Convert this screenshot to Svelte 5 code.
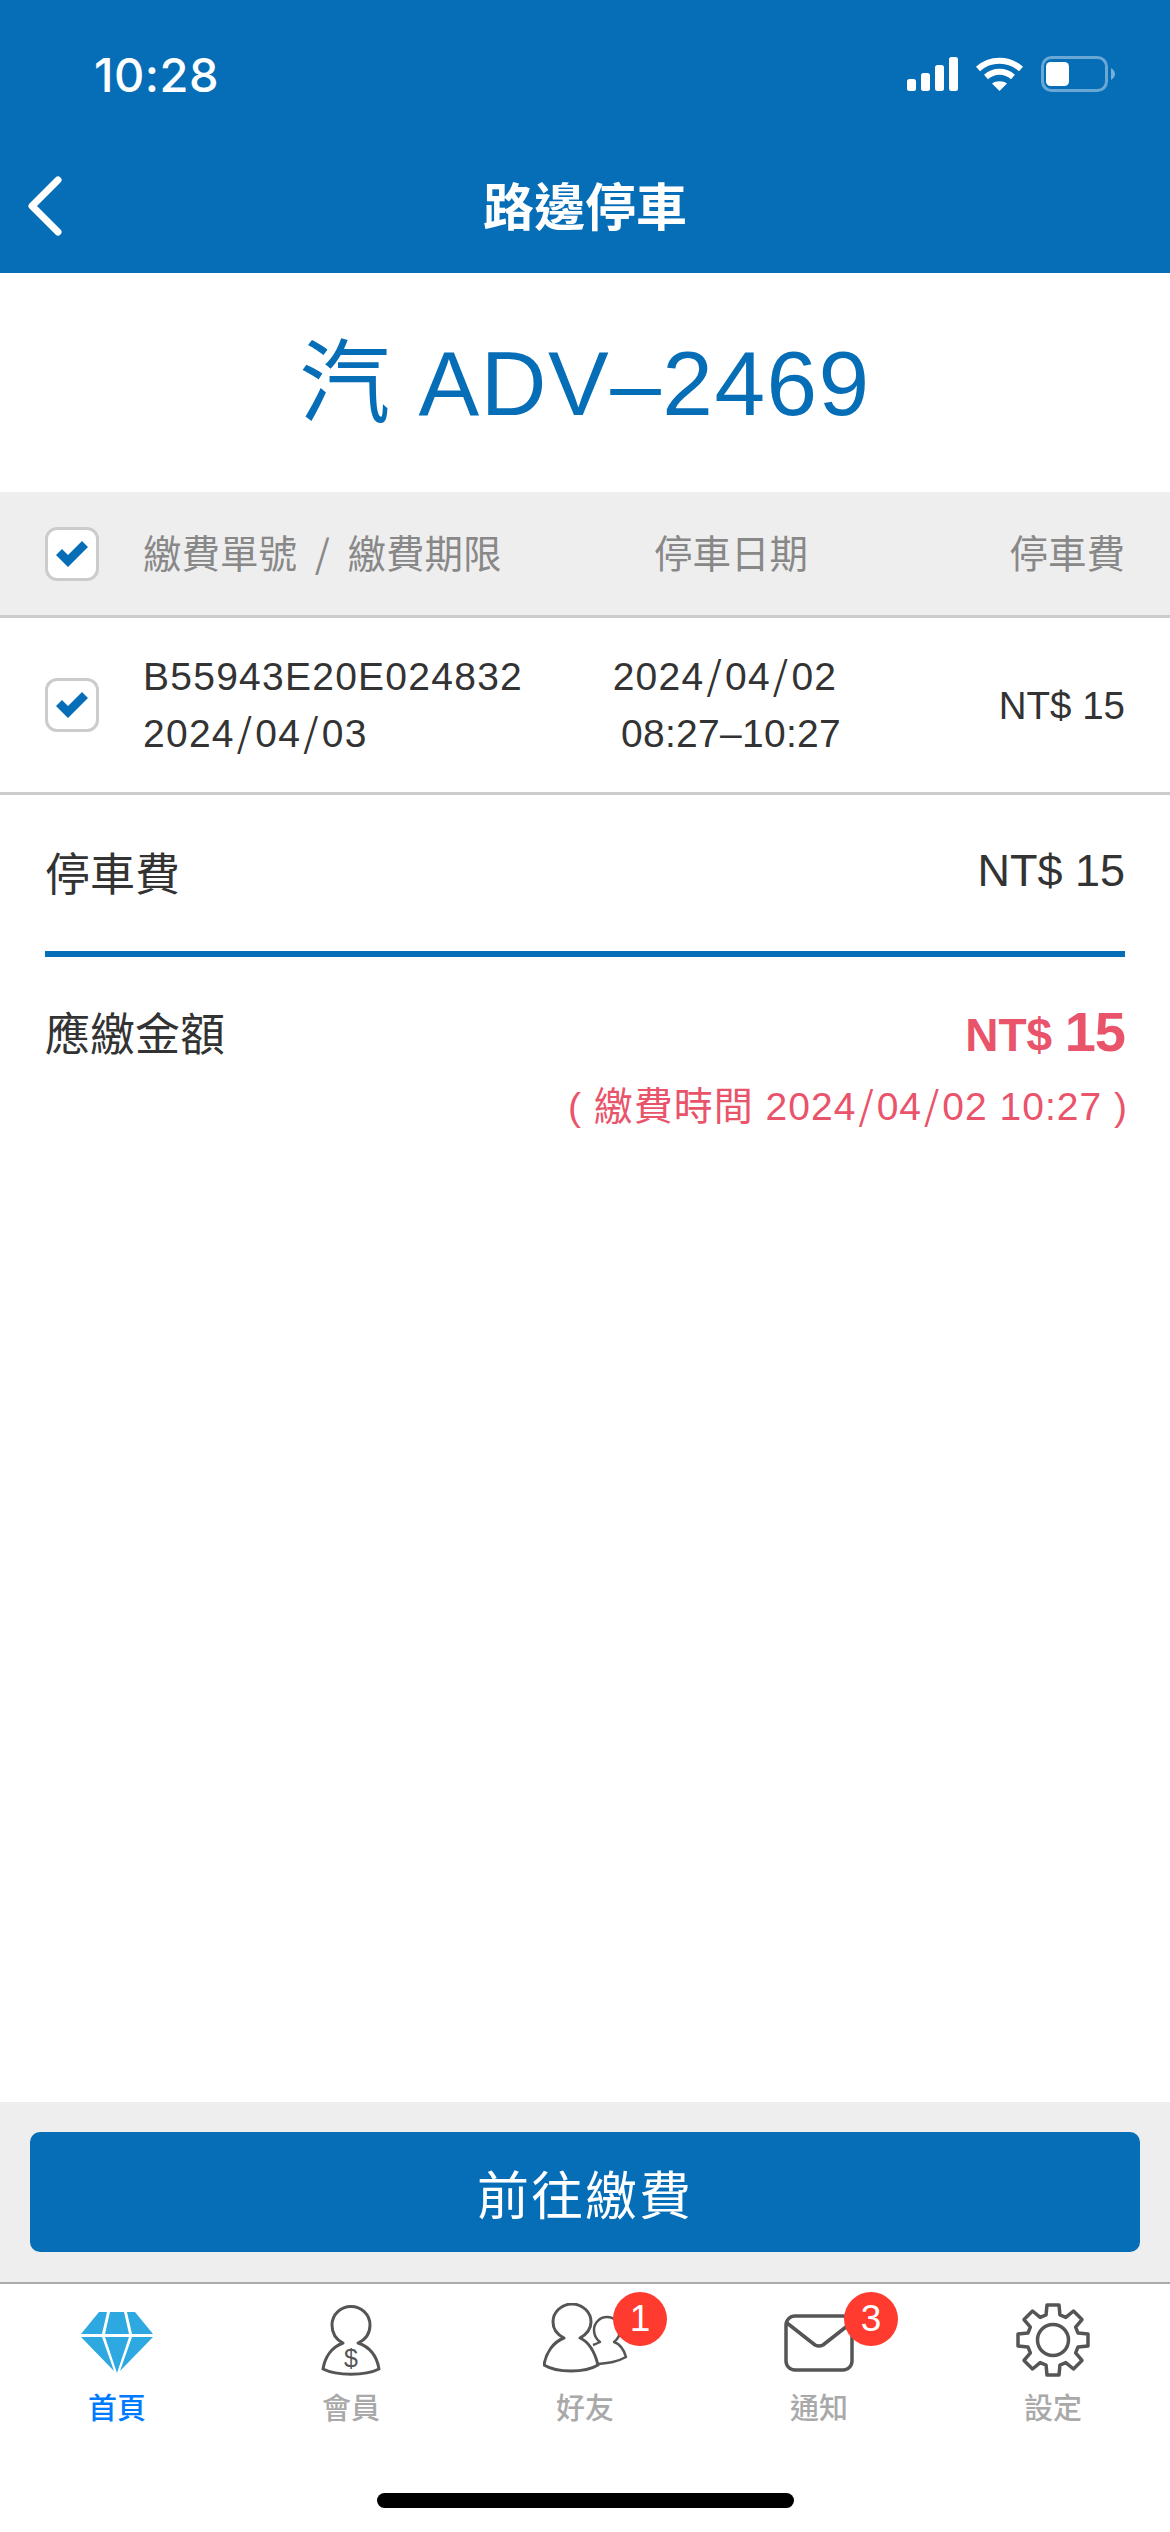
<script>
  function gearPath() {
    const cx = 37, cy = 37, outer = 35.5, inner = 26, n = 8;
    let d = '';
    const pt = (r, a) => `${(cx + r * Math.sin(a)).toFixed(2)} ${(cy - r * Math.cos(a)).toFixed(2)}`;
    for (let i = 0; i < n; i++) {
      const a = (i * 2 * Math.PI) / n;
      const w1 = 0.27, w2 = 0.17;
      d += `${i === 0 ? 'M' : 'L'}${pt(inner, a - w1)} L${pt(outer, a - w2)} L${pt(outer, a + w2)} L${pt(inner, a + w1)} `;
    }
    return d + 'Z';
  }
  const gear = gearPath();
</script>

<div class="page">
  <header class="head">
    <div class="status">
      <span class="time">10:28</span>
      <div class="status-icons">
        <svg width="51" height="34" viewBox="0 0 51 34" fill="#fff">
          <rect x="0" y="22" width="9" height="12" rx="2.500"/>
          <rect x="14" y="16" width="9" height="18" rx="2.500"/>
          <rect x="28" y="8" width="9" height="26" rx="2.500"/>
          <rect x="42" y="0" width="9" height="34" rx="2.500"/>
        </svg>
        <svg width="49" height="36" viewBox="0 0 49 36" fill="none" stroke="#fff" stroke-width="6">
          <path d="M3 13 C15 2 34 2 46 13"/>
          <path d="M11 21 C19 14 30 14 38 21"/>
          <path d="M17 27.500 C21 24.500 28 24.500 32 27.500 L24.500 35 Z" fill="#fff" stroke="none"/>
        </svg>
        <svg width="74" height="36" viewBox="0 0 74 36" fill="none">
          <rect x="1.500" y="1.500" width="64" height="33" rx="9" stroke="#fff" stroke-opacity=".4" stroke-width="3"/>
          <rect x="5" y="6" width="23" height="24" rx="4.500" fill="#fff"/>
          <path d="M70 12 C73 14 74 16 74 18 C74 20 73 22 70 24 Z" fill="#fff" fill-opacity=".45"/>
        </svg>
      </div>
    </div>
    <div class="nav">
      <svg class="back" width="38" height="60" viewBox="0 0 38 60" fill="none" stroke="#fff" stroke-width="7" stroke-linecap="round" stroke-linejoin="round">
        <path d="M33 4 L7 30 L33 56"/>
      </svg>
      <h1>路邊停車</h1>
    </div>
  </header>

  <div class="plate">汽 ADV–2469</div>

  <div class="row thead">
    <span class="check"><svg width="34" height="28" viewBox="0 0 34 28"><path d="M1 15 L7 9 L13 15 L27 1 L33 7 L13 27 Z" fill="#066db7"/></svg></span>
    <span class="c-no">繳費單號 <i class="sl">/</i> 繳費期限</span>
    <span class="c-date">停車日期</span>
    <span class="c-fee">停車費</span>
  </div>

  <div class="row tbody">
    <span class="check"><svg width="34" height="28" viewBox="0 0 34 28"><path d="M1 15 L7 9 L13 15 L27 1 L33 7 L13 27 Z" fill="#066db7"/></svg></span>
    <span class="c-no"><span>B55943E20E024832</span><span>2024<i class="sl">/</i>04<i class="sl">/</i>03</span></span>
    <span class="c-date"><span>2024<i class="sl">/</i>04<i class="sl">/</i>02&nbsp;</span><span class="span-time">08:27–10:27</span></span>
    <span class="c-fee">NT$ 15</span>
  </div>

  <div class="sum">
    <span>停車費</span>
    <span>NT$ 15</span>
  </div>

  <div class="total">
    <div class="total-line">
      <span>應繳金額</span>
      <span class="amount"><b class="cur">NT$</b> <b class="num">15</b></span>
    </div>
    <div class="deadline">( 繳費時間 2024<i class="sl">/</i>04<i class="sl">/</i>02 10:27 )</div>
  </div>

  <div class="spacer"></div>

  <div class="action">
    <button type="button">前往繳費</button>
  </div>

  <nav class="tabs">
    <div class="tab active">
      <svg class="icon diamond" width="74" height="62" viewBox="0 0 74 62" fill="#2da8e0">
        <path d="M19 1 L27 1 L22 23 L1 23 Z"/>
        <path d="M30 1 L44 1 L49 23 L25 23 Z"/>
        <path d="M47 1 L55 1 L73 23 L52 23 Z"/>
        <path d="M1 26 L22 26 L34 60 Z"/>
        <path d="M25 26 L49 26 L37 62 Z"/>
        <path d="M52 26 L73 26 L40 60 Z"/>
      </svg>
      <span>首頁</span>
    </div>
    <div class="tab">
      <svg class="icon member" width="60" height="72" viewBox="0 0 60 72" fill="none" stroke="#555" stroke-width="3">
        <path d="M22 38 C14 34 11 27 11 20 A19 18.500 0 0 1 49 20 C49 27 46 34 37 38 C49 42 56 52 58 64 C44 71 16 71 2 64 C4 52 11 42 22 38 Z" stroke-linejoin="round"/>
        <text x="30" y="62" text-anchor="middle" class="dollar">$</text>
      </svg>
      <span>會員</span>
    </div>
    <div class="tab">
      <svg class="icon friends" width="86" height="72" viewBox="0 0 86 72" fill="none" stroke="#555" stroke-width="3" stroke-linejoin="round">
        <path d="M50 42 C53 41 55 40 57 39 C53 36 51 32 51 27 A13 13 0 0 1 77 27 C77 32 75 36 71 39 C77 41 81 47 83 54 C74 59 66 60 55 61" stroke-width="2.500"/>
        <path d="M21 35 C13 31 10 26 10 19 A19 18 0 0 1 48 19 C48 26 44 31 37 35 C46 39 52 50 55 62 C42 70 14 70 1 62 C3 50 10 39 21 35 Z" fill="#fff"/>
      </svg>
      <span>好友</span>
      <b class="badge">1</b>
    </div>
    <div class="tab">
      <svg class="icon mail" width="70" height="58" viewBox="0 0 70 58" fill="none" stroke="#555" stroke-width="3.500">
        <rect x="2" y="2" width="66" height="54" rx="9"/>
        <path d="M3 9 L31 31 Q35 33 39 31 L67 9" stroke-linejoin="round"/>
      </svg>
      <span>通知</span>
      <b class="badge">3</b>
    </div>
    <div class="tab">
      <svg class="icon settings" width="74" height="74" viewBox="0 0 74 74" fill="none" stroke="#555" stroke-width="3.500" stroke-linejoin="round">
        <path d={gear}/>
        <circle cx="37" cy="37" r="15.500"/>
      </svg>
      <span>設定</span>
    </div>
    <div class="home-bar"></div>
  </nav>
</div>

<style>
  :global(body) {
    margin: 0;
    background: #fff;
  }
  .page {
    width: 1170px;
    height: 2532px;
    display: flex;
    flex-direction: column;
    font-family: "Liberation Sans", "Noto Sans CJK TC", sans-serif;
    color: #333;
    overflow: hidden;
  }
  .sl {
    font-family: "Noto Sans CJK TC", sans-serif;
    font-style: normal;
    padding: 0 2px;
    line-height: 1;
  }
  .head {
    height: 273px;
    background: #066db7;
    color: #fff;
    flex: none;
  }
  .status {
    height: 132px;
    box-sizing: border-box;
    padding: 53px 55px 0 94px;
    display: flex;
    justify-content: space-between;
    align-items: flex-start;
  }
  .time {
    font-family: Inter, "Liberation Sans", sans-serif;
    font-weight: 500;
    font-size: 47px;
    line-height: 44px;
    letter-spacing: 0.5px;
  }
  .status-icons {
    display: flex;
    align-items: center;
    gap: 17px;
    padding-top: 3px;
  }
  .nav {
    height: 141px;
    box-sizing: border-box;
    padding-top: 12px;
    position: relative;
    display: flex;
    align-items: center;
    justify-content: center;
  }
  .nav h1 {
    margin: 0;
    font-size: 51px;
    line-height: 60px;
    font-weight: 700;
  }
  .back {
    position: absolute;
    left: 25px;
    top: 44px;
  }
  .plate {
    height: 219px;
    flex: none;
    display: flex;
    align-items: center;
    justify-content: center;
    color: #066db7;
    font-size: 91px;
    letter-spacing: 1.5px;
    padding-bottom: 16px;
    box-sizing: border-box;
  }
  .row {
    display: grid;
    grid-template-columns: 54px 432px 400px 1fr;
    align-items: center;
    padding: 0 45px;
    border-bottom: 3px solid #ccc;
    box-sizing: border-box;
    flex: none;
  }
  .row .check {
    width: 54px;
    height: 54px;
    box-sizing: border-box;
    border: 3px solid #ccc;
    border-radius: 12px;
    background: #fff;
    display: flex;
    align-items: center;
    justify-content: center;
  }
  .c-no {
    display: flex;
    flex-direction: column;
    margin-left: 44px;
    white-space: nowrap;
  }
  .c-date {
    display: flex;
    flex-direction: column;
    align-items: center;
    text-align: center;
    white-space: nowrap;
  }
  .c-fee {
    text-align: right;
    white-space: nowrap;
  }
  .thead {
    height: 126px;
    background: #eee;
    color: #888;
    font-size: 38.500px;
  }
  .thead > span:not(.check) {
    margin-bottom: 6px;
    display: block;
  }
  .thead .c-no { word-spacing: 5px; }
  .tbody {
    height: 177px;
    font-size: 39px;
    letter-spacing: 1.25px;
    line-height: 57px;
  }
  .span-time { letter-spacing: 0.3px; }
  .tbody .c-fee {
    font-size: 38.500px;
    letter-spacing: 0;
  }
  .sum {
    flex: none;
    height: 162px;
    margin: 0 45px;
    box-sizing: border-box;
    border-bottom: 6px solid #066db7;
    padding-bottom: 4px;
    display: flex;
    justify-content: space-between;
    align-items: center;
    font-size: 45px;
  }
  .total {
    flex: none;
    padding: 0 45px;
  }
  .total-line {
    display: flex;
    justify-content: space-between;
    align-items: baseline;
    font-size: 45px;
    line-height: 70px;
    margin-top: 40px;
  }
  .amount {
    color: #e9546b;
    white-space: nowrap;
  }
  .cur { font-size: 46px; }
  .num {
    font-size: 56px;
    letter-spacing: -1px;
  }
  .deadline {
    color: #e9546b;
    font-size: 39px;
    line-height: 50px;
    text-align: right;
    margin-top: 11px;
    letter-spacing: 1px;
    margin-right: -3px;
  }
  .spacer { flex: 1; }
  .action {
    flex: none;
    height: 180px;
    background: #eee;
    padding: 30px 30px 0;
    box-sizing: border-box;
  }
  .action button {
    width: 100%;
    height: 120px;
    border: 0;
    border-radius: 10px;
    background: #066db7;
    color: #fff;
    font-family: inherit;
    font-size: 52px;
    letter-spacing: 2px;
  }
  .tabs {
    flex: none;
    height: 250px;
    border-top: 2px solid #aaa;
    box-sizing: border-box;
    display: grid;
    grid-template-columns: repeat(5, 234px);
    position: relative;
  }
  .tab {
    position: relative;
    height: 143px;
    font-size: 29px;
    font-weight: 500;
    line-height: 36px;
    color: #a9a9a9;
    display: flex;
    flex-direction: column;
    align-items: center;
    justify-content: flex-end;
  }
  .tab.active { color: #007aff; }
  .icon {
    position: absolute;
    left: 50%;
    transform: translateX(-50%);
  }
  .diamond { top: 27px; }
  .member { top: 21px; }
  .settings { top: 19px; }
  .mail { top: 30px; }
  .tab .friends {
    left: 75px;
    transform: none;
    top: 19px;
  }
  .dollar {
    font-family: "Liberation Sans", sans-serif;
    font-size: 25px;
    fill: #555;
    stroke: none;
  }
  .badge {
    position: absolute;
    left: 145px;
    top: 8px;
    width: 54px;
    height: 54px;
    border-radius: 50%;
    background: #ff3b30;
    color: #fff;
    font-family: "Liberation Sans", sans-serif;
    font-weight: 400;
    font-size: 37px;
    line-height: 54px;
    text-align: center;
  }
  .tab:nth-child(4) .badge { left: 142px; }
  .home-bar {
    position: absolute;
    left: 377px;
    top: 209px;
    width: 417px;
    height: 15px;
    border-radius: 8px;
    background: #000;
  }
</style>
